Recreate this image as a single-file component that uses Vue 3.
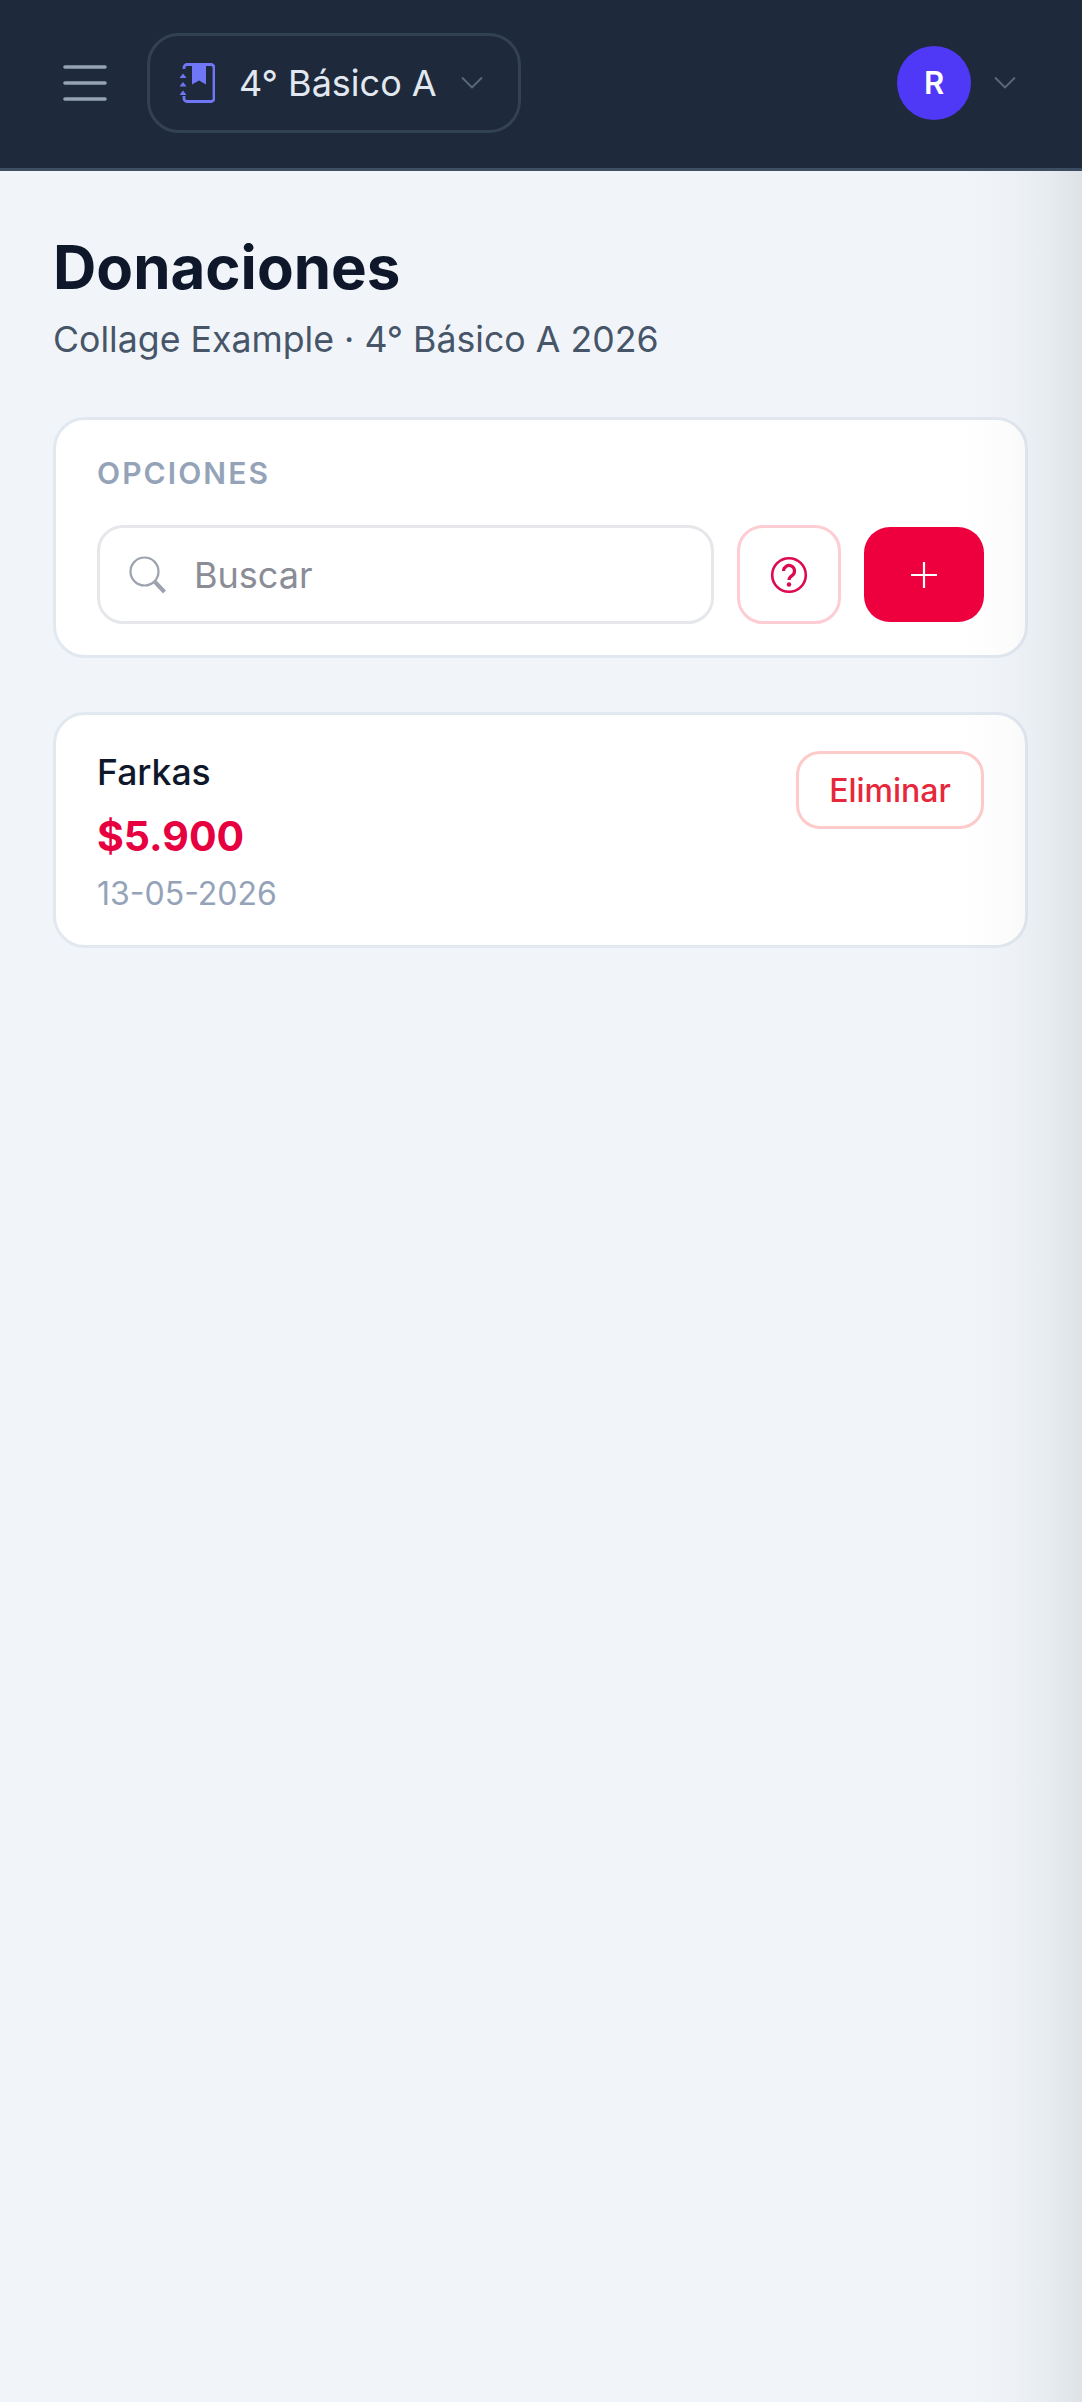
<script setup>
const course = '4° Básico A'
const donation = { name: 'Farkas', amount: '$5.900', date: '13-05-2026' }
</script>

<template>
  <div class="app">
    <header class="topbar">
      <button class="menu" aria-label="Menú">
        <svg width="44" height="38" viewBox="0 0 44 38" fill="none" stroke="#94a3b8" stroke-width="3.600" stroke-linecap="round">
          <path d="M2 3h40M2 19h40M2 35h40" />
        </svg>
      </button>
      <button class="course">
        <svg class="book" width="36" height="40" viewBox="0 0 36 40" fill="none">
          <path d="M5 6V4.500A3 3 0 0 1 8 1.500h24a3 3 0 0 1 3 3v31a3 3 0 0 1-3 3H8a3 3 0 0 1-3-3V33" stroke="#7077f6" stroke-width="2.800" />
          <path d="M13 1.500h14v20l-7-4-7 4z" fill="#7077f6" />
          <path d="M4 10.500l3.500 4.500H0.500zM4 19l3.500 4.500H0.500zM4 27.500l3.500 4.500H0.500z" fill="#7077f6" />
        </svg>
        <span class="course-name">{{ course }}</span>
        <svg class="chev" width="22" height="13" viewBox="0 0 22 13" fill="none" stroke="#5d6b7e" stroke-width="1.800">
          <path d="M1 1.500l10 10 10-10" />
        </svg>
      </button>
      <div class="user">
        <div class="avatar">R</div>
        <svg width="22" height="13" viewBox="0 0 22 13" fill="none" stroke="#5d6b7e" stroke-width="1.800">
          <path d="M1 1.500l10 10 10-10" />
        </svg>
      </div>
    </header>

    <main class="page">
      <h1 class="title">Donaciones</h1>
      <p class="subtitle">Collage Example · 4° Básico A 2026</p>

      <section class="card options">
        <h2 class="label">OPCIONES</h2>
        <div class="tools">
          <label class="search">
            <svg width="38" height="38" viewBox="0 0 38 38" fill="none" stroke="#9ca3af">
              <circle cx="15.500" cy="15.500" r="14" stroke-width="2.200" />
              <path d="M26 26l9.500 10" stroke-width="4" />
            </svg>
            <input type="text" placeholder="Buscar" />
          </label>
          <button class="help" aria-label="Ayuda">
            <svg width="38" height="38" viewBox="0 0 38 38" fill="none">
              <circle cx="19" cy="19" r="16.800" stroke="#dc0a4e" stroke-width="2.600" />
              <path d="M13.500 15a5.500 5.500 0 1 1 8.500 4.600c-2 1.300-3 2.200-3 4.400" stroke="#dc0a4e" stroke-width="3.200" />
              <circle cx="19" cy="28.500" r="2.200" fill="#dc0a4e" />
            </svg>
          </button>
          <button class="add" aria-label="Agregar">
            <svg width="28" height="28" viewBox="0 0 28 28" stroke="#fff" stroke-width="2.200">
              <path d="M14 1v26M1 14h26" />
            </svg>
          </button>
        </div>
      </section>

      <section class="card item">
        <div class="item-info">
          <div class="item-name">{{ donation.name }}</div>
          <div class="item-amount">{{ donation.amount }}</div>
          <div class="item-date">{{ donation.date }}</div>
        </div>
        <button class="delete">Eliminar</button>
      </section>
    </main>

    <div class="edge-shadow"></div>
  </div>
</template>

<style scoped>
.app {
  position: relative;
  width: 1082px;
  min-height: 2402px;
  overflow: hidden;
  background: #f1f5f9;
  font-family: Inter, "Liberation Sans", sans-serif;
}
button {
  font-family: inherit;
  background: none;
  border: 0;
  padding: 0;
}
.topbar {
  box-sizing: border-box;
  height: 171px;
  display: flex;
  align-items: center;
  padding: 0 66px 3px 63px;
  background: #1e293b;
  border-bottom: 3px solid #3f4f63;
}
.menu {
  display: flex;
  margin-right: 40px;
}
.course {
  box-sizing: border-box;
  width: 374px;
  height: 100px;
  display: flex;
  align-items: center;
  padding-left: 29px;
  border: 3px solid #334155;
  border-radius: 32px;
}
.course-name {
  margin-left: 24px;
  font-size: 36px;
  color: #e2e8f0;
  white-space: nowrap;
}
.chev {
  margin-left: 24px;
}
.user {
  margin-left: auto;
  display: flex;
  align-items: center;
  gap: 23px;
}
.avatar {
  width: 74px;
  height: 74px;
  border-radius: 50%;
  background: #4f39f6;
  color: #fff;
  font-size: 31px;
  font-weight: 600;
  display: flex;
  align-items: center;
  justify-content: center;
}
.page {
  padding: 60px 54px 0 53px;
}
.title {
  margin: 0;
  font-size: 60px;
  line-height: 72px;
  font-weight: 700;
  color: #0f172a;
}
.subtitle {
  margin: 14px 0 0;
  font-size: 35.700px;
  line-height: 44px;
  color: #475569;
}
.card {
  box-sizing: border-box;
  background: #fff;
  border: 3px solid #e2e8f0;
  border-radius: 32px;
}
.options {
  margin-top: 56px;
  height: 241px;
  padding: 35px 41px 0;
}
.label {
  margin: 0;
  font-size: 30px;
  line-height: 36px;
  font-weight: 600;
  letter-spacing: 2.100px;
  color: #94a3b8;
}
.tools {
  display: flex;
  align-items: center;
  gap: 23px;
  margin-top: 34px;
}
.search {
  box-sizing: border-box;
  flex: 1;
  min-width: 0;
  height: 99px;
  display: flex;
  align-items: center;
  gap: 27px;
  padding-left: 29px;
  border: 3px solid #e5e7eb;
  border-radius: 26px;
}
.search input {
  flex: 1;
  min-width: 0;
  border: 0;
  outline: 0;
  padding: 0;
  background: none;
  font-family: inherit;
  font-size: 36px;
  color: #111827;
}
.search input::placeholder {
  color: #8a8c96;
  opacity: 1;
}
.help {
  box-sizing: border-box;
  flex: none;
  width: 104px;
  height: 99px;
  display: flex;
  align-items: center;
  justify-content: center;
  border: 3px solid #fecdd3;
  border-radius: 26px;
}
.add {
  flex: none;
  width: 120px;
  height: 95px;
  display: flex;
  align-items: center;
  justify-content: center;
  background: #ee003f;
  border-radius: 26px;
}
.item {
  margin-top: 54px;
  height: 236px;
  display: flex;
  justify-content: space-between;
  align-items: flex-start;
  padding: 36px 41px 0;
}
.item-name {
  font-size: 35.500px;
  line-height: 44px;
  font-weight: 500;
  color: #0f172a;
}
.item-amount {
  margin-top: 15px;
  font-size: 41px;
  line-height: 52px;
  font-weight: 700;
  color: #e6003f;
}
.item-date {
  margin-top: 12px;
  font-size: 32px;
  line-height: 40px;
  color: #94a3b8;
}
.delete {
  box-sizing: border-box;
  flex: none;
  width: 188px;
  height: 78px;
  border: 3px solid #fecaca;
  border-radius: 24px;
  font-size: 32px;
  font-weight: 500;
  color: #e7283c;
}
.edge-shadow {
  position: absolute;
  top: 0;
  right: 0;
  bottom: 0;
  width: 120px;
  pointer-events: none;
  background: linear-gradient(to right, rgba(30, 41, 59, 0) 0%, rgba(30, 41, 59, 0.015) 40%, rgba(30, 41, 59, 0.045) 70%, rgba(30, 41, 59, 0.09) 100%);
}
</style>
